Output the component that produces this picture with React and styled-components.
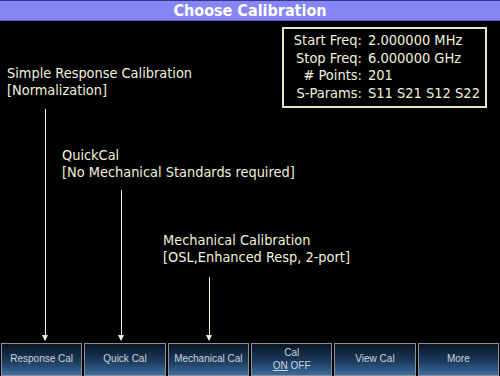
import React from 'react'
import styled, { createGlobalStyle } from 'styled-components'

const GlobalStyle = createGlobalStyle`
  html, body {
    margin: 0;
    padding: 0;
    background: #000;
  }
`

const cream = '#f2f2dc'

const Screen = styled.div`
  width: 500px;
  height: 376px;
  background: #000;
  display: flex;
  flex-direction: column;
  overflow: hidden;
  font-family: "DejaVu Sans Condensed", "DejaVu Sans", sans-serif;
  font-stretch: condensed;
`

const TitleBar = styled.div`
  height: 19px;
  border-top: 1px solid #34348a;
  border-bottom: 1px solid #5c5cc8;
  background: #8585f6;
  color: #fff;
  font-weight: bold;
  font-size: 16px;
  line-height: 19px;
  text-align: center;
`

const Body = styled.div`
  flex: 1;
  position: relative;
  display: flex;
  justify-content: flex-end;
  align-items: flex-start;
  padding: 6px 13px 0 0;
`

const InfoBox = styled.div`
  width: 193px;
  border: 2px solid #e6e6c8;
  padding: 3px 0 4px 8px;
  display: grid;
  grid-template-columns: 70px auto;
  column-gap: 6px;
  color: ${cream};
  font-size: 14.5px;
  line-height: 17.5px;
`

const Label = styled.span`
  text-align: right;
  white-space: nowrap;
`

const Value = styled.span`
  white-space: nowrap;
`

// callouts are annotations on the diagram, each with its arrow down to a softkey
const Callout = styled.div`
  position: absolute;
  left: ${p => p.$x}px;
  top: ${p => p.$y}px;
  bottom: 3px;
  display: flex;
  flex-direction: column;
  color: ${cream};
  font-size: 14.4px;
  line-height: 17px;
  white-space: nowrap;
`

const Arrow = styled.div`
  flex: 1;
  position: relative;
  width: 1px;
  margin-left: ${p => p.$offset}px;
  margin-top: ${p => p.$gap}px;
  background: ${cream};

  &::after {
    content: '';
    position: absolute;
    left: -3px;
    bottom: -1px;
    border-left: 3.5px solid transparent;
    border-right: 3.5px solid transparent;
    border-top: 6px solid ${cream};
  }
`

const SoftKeys = styled.div`
  height: 33px;
  display: grid;
  grid-template-columns: repeat(6, 1fr);
  gap: 2px;
  padding: 0 1px;
`

const SoftKey = styled.div`
  border: 1px solid #8b9099;
  background: linear-gradient(to bottom, #0a1526 0%, #1c3a5c 55%, #3c6d9e 100%);
  color: #cdd4de;
  font-family: "Liberation Sans", Arial, sans-serif;
  font-size: 10px;
  line-height: 12.5px;
  display: flex;
  flex-direction: column;
  align-items: center;
  justify-content: center;
`

const On = styled.span`
  text-decoration: underline;
`

const info = [
  ['Start Freq:', '2.000000 MHz'],
  ['Stop Freq:', '6.000000 GHz'],
  ['# Points:', '201'],
  ['S-Params:', 'S11 S21 S12 S22'],
]

const callouts = [
  { x: 7, y: 44, lines: ['Simple Response Calibration', '[Normalization]'], offset: 38, gap: 10 },
  { x: 62, y: 126, lines: ['QuickCal', '[No Mechanical Standards required]'], offset: 59, gap: 9 },
  { x: 163, y: 211, lines: ['Mechanical Calibration', '[OSL,Enhanced Resp, 2-port]'], offset: 46, gap: 11 },
]

export default function App() {
  return (
    <Screen>
      <GlobalStyle />
      <TitleBar>Choose Calibration</TitleBar>
      <Body>
        <InfoBox>
          {info.map(([k, v]) => (
            <React.Fragment key={k}>
              <Label>{k}</Label>
              <Value>{v}</Value>
            </React.Fragment>
          ))}
        </InfoBox>
        {callouts.map(c => (
          <Callout key={c.lines[0]} $x={c.x} $y={c.y}>
            {c.lines.map(l => <div key={l}>{l}</div>)}
            <Arrow $offset={c.offset} $gap={c.gap} />
          </Callout>
        ))}
      </Body>
      <SoftKeys>
        <SoftKey>Response Cal</SoftKey>
        <SoftKey>Quick Cal</SoftKey>
        <SoftKey>Mechanical Cal</SoftKey>
        <SoftKey>
          <span>Cal</span>
          <span><On>ON</On> OFF</span>
        </SoftKey>
        <SoftKey>View Cal</SoftKey>
        <SoftKey>More</SoftKey>
      </SoftKeys>
    </Screen>
  )
}
